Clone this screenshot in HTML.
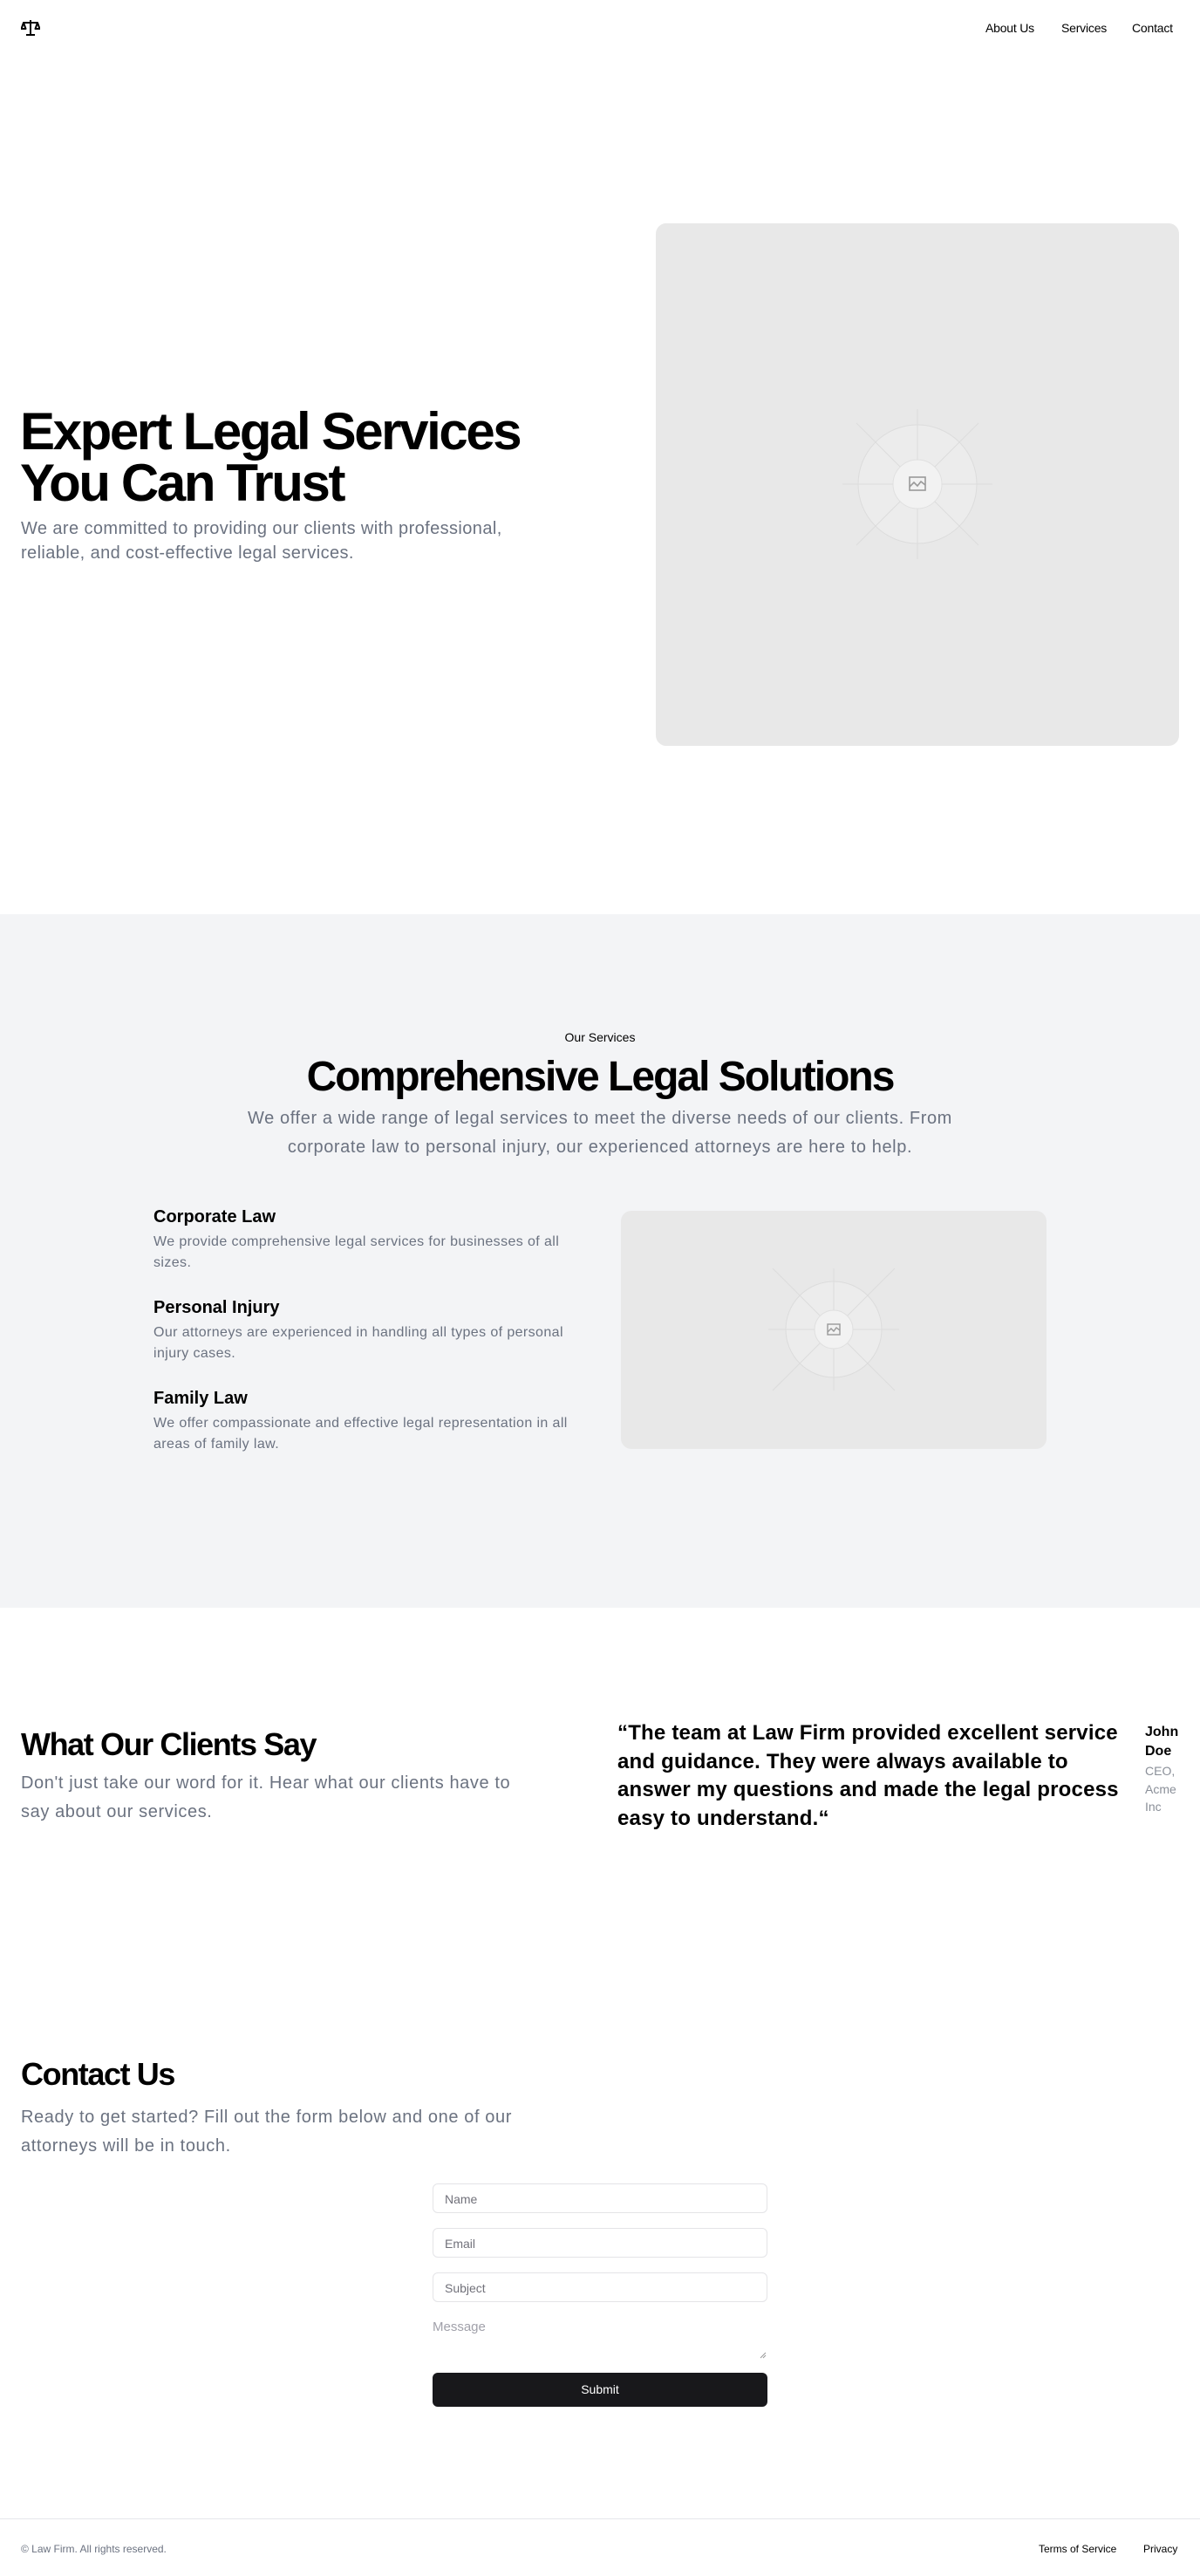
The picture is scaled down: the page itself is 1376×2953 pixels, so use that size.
<!DOCTYPE html>
<html><head><meta charset="utf-8"><style>
*{margin:0;padding:0;box-sizing:border-box}
body{width:1376px;height:2953px;position:relative;background:#fff;font-family:"Liberation Sans",sans-serif;color:#000;overflow:hidden}
.a{position:absolute}
.g{color:#6b7280;letter-spacing:0.4px}
.ph{background:#e8e8e8;border-radius:12px}
.in{position:absolute;left:496px;width:384px;height:34px;border:1px solid #e4e4e7;border-radius:6px;font-size:14px;color:#71717a;padding:9px 13px;line-height:16px}
</style></head><body>
<svg class="a" style="left:24px;top:22px" width="22" height="20" viewBox="0 0 22 20" fill="none" stroke="#000" stroke-width="2"><path d="M11 1v17M6 18h10M3 4h16M3 4l-2.5 7h5zM19 4l-2.5 7h5z" stroke-linejoin="round"/></svg>
<div class="a" style="top:23px;left:1130px;font-size:14px;line-height:18px;letter-spacing:-0.2px">About Us</div>
<div class="a" style="top:23px;left:1217px;font-size:14px;line-height:18px;letter-spacing:-0.2px">Services</div>
<div class="a" style="top:23px;left:1298px;font-size:14px;line-height:18px;letter-spacing:-0.2px">Contact</div>

<div class="a" style="left:23px;top:465px;font-size:60px;font-weight:bold;line-height:59px;letter-spacing:-2.4px;width:700px">Expert Legal Services<br>You Can Trust</div>
<div class="a g" style="left:24px;top:592px;font-size:20px;line-height:28px;width:600px">We are committed to providing our clients with professional, reliable, and cost-effective legal services.</div>
<div class="a ph" style="left:752px;top:256px;width:600px;height:599px"></div>
<svg class="a" style="left:962px;top:465px" width="180" height="180" viewBox="-90 -90 180 180"><g stroke="#dcdcdc" stroke-width="1" fill="none"><circle r="68" fill="#ececec"/><path d="M0-86V86M-86 0H86M-70-70L70 70M70-70L-70 70"/><circle r="28" fill="#f2f2f2" stroke="#e0e0e0"/></g><g stroke="#999" stroke-width="1.6" fill="none"><rect x="-9" y="-8" width="18" height="15"/><path d="M-9 3l5-5 4 4 4-5 5 4"/></g></svg>

<div class="a" style="left:0;top:1048px;width:1376px;height:795px;background:#f3f4f6"></div>
<div class="a" style="left:0;top:1180px;width:1376px;text-align:center;font-size:14px;line-height:18px">Our Services</div>
<div class="a" style="left:0;top:1205px;width:1376px;text-align:center;font-size:48px;font-weight:bold;line-height:60px;letter-spacing:-2px">Comprehensive Legal Solutions</div>
<div class="a g" style="left:258px;top:1266px;width:860px;text-align:center;font-size:20px;line-height:33px;letter-spacing:0.6px">We offer a wide range of legal services to meet the diverse needs of our clients. From corporate law to personal injury, our experienced attorneys are here to help.</div>
<div class="a" style="left:176px;top:1382px;width:490px">
<div style="font-size:20px;font-weight:bold;line-height:26px">Corporate Law</div>
<div class="g" style="font-size:16px;line-height:24px;margin-top:4px">We provide comprehensive legal services for businesses of all sizes.</div>
<div style="font-size:20px;font-weight:bold;line-height:26px;margin-top:26px">Personal Injury</div>
<div class="g" style="font-size:16px;line-height:24px;margin-top:4px">Our attorneys are experienced in handling all types of personal injury cases.</div>
<div style="font-size:20px;font-weight:bold;line-height:26px;margin-top:26px">Family Law</div>
<div class="g" style="font-size:16px;line-height:24px;margin-top:4px">We offer compassionate and effective legal representation in all areas of family law.</div>
</div>
<div class="a ph" style="left:712px;top:1388px;width:488px;height:273px"></div>
<svg class="a" style="left:881px;top:1449px" width="150" height="150" viewBox="-75 -75 150 150"><g stroke="#dcdcdc" stroke-width="1" fill="none"><circle r="55" fill="#ececec"/><path d="M0-70V70M-75 0H75M-70-70L70 70M70-70L-70 70"/><circle r="22" fill="#f2f2f2" stroke="#e0e0e0"/></g><g stroke="#999" stroke-width="1.4" fill="none"><rect x="-7" y="-6" width="14" height="12"/><path d="M-7 3l4-4 3 3 3-4 4 3"/></g></svg>

<div class="a" style="left:24px;top:1978px;font-size:36px;font-weight:bold;line-height:44px;letter-spacing:-1.4px">What Our Clients Say</div>
<div class="a g" style="left:24px;top:2028px;width:600px;font-size:20px;line-height:33px;letter-spacing:0.6px">Don't just take our word for it. Hear what our clients have to say about our services.</div>
<div class="a" style="left:708px;top:1971px;width:590px;font-size:24px;font-weight:bold;line-height:32.5px;letter-spacing:0.2px">“The team at Law Firm provided excellent service and guidance. They were always available to answer my questions and made the legal process easy to understand.“</div>
<div class="a" style="left:1313px;top:1975px;width:50px;font-size:16px;line-height:22px;font-weight:bold">John Doe</div>
<div class="a" style="left:1313px;top:2020px;width:50px;font-size:14px;line-height:20.5px;color:#8a8f98">CEO, Acme Inc</div>

<div class="a" style="left:24px;top:2356px;font-size:36px;font-weight:bold;line-height:44px;letter-spacing:-1.4px">Contact Us</div>
<div class="a g" style="left:24px;top:2411px;width:600px;font-size:20px;line-height:33px;letter-spacing:0.6px">Ready to get started? Fill out the form below and one of our attorneys will be in touch.</div>
<div class="in" style="top:2503px">Name</div>
<div class="in" style="top:2554px">Email</div>
<div class="in" style="top:2605px">Subject</div>
<div class="a" style="left:496px;top:2659px;font-size:15px;color:#a1a1aa">Message</div>
<svg class="a" style="left:871px;top:2696px" width="8" height="8"><path d="M1 7L7 1M4 7L7 4" stroke="#999"/></svg>
<div class="a" style="left:496px;top:2720px;width:384px;height:39px;background:#18181b;border-radius:6px;color:#fff;font-size:14px;text-align:center;line-height:39px">Submit</div>

<div class="a" style="left:0;top:2887px;width:1376px;height:1px;background:#e5e7eb"></div>
<div class="a g" style="left:24px;top:2914px;font-size:12px;line-height:16px;letter-spacing:0">© Law Firm. All rights reserved.</div>
<div class="a" style="left:1191px;top:2914px;font-size:12px;line-height:16px">Terms of Service</div>
<div class="a" style="left:1311px;top:2914px;font-size:12px;line-height:16px">Privacy</div>
</body></html>
